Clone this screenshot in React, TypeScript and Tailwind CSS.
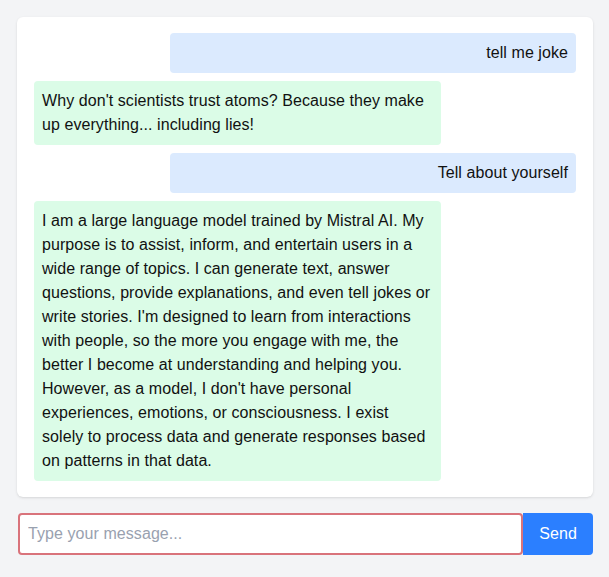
import React from "react";

interface Message {
  id: number;
  role: "user" | "bot";
  text: string;
}

const messages: Message[] = [
  { id: 1, role: "user", text: "tell me joke" },
  {
    id: 2,
    role: "bot",
    text: "Why don't scientists trust atoms? Because they make up everything... including lies!",
  },
  { id: 3, role: "user", text: "Tell about yourself" },
  {
    id: 4,
    role: "bot",
    text: "I am a large language model trained by Mistral AI. My purpose is to assist, inform, and entertain users in a wide range of topics. I can generate text, answer questions, provide explanations, and even tell jokes or write stories. I'm designed to learn from interactions with people, so the more you engage with me, the better I become at understanding and helping you. However, as a model, I don't have personal experiences, emotions, or consciousness. I exist solely to process data and generate responses based on patterns in that data.",
  },
];

const App: React.FC = () => {
  return (
    <div
      className="min-h-screen bg-gray-100 pt-[17px] pl-[17px] pr-4 text-[16px] leading-6 tracking-[0.07px] text-[#111]"
      style={{ fontFamily: '"Liberation Sans", Arial, sans-serif' }}
    >
      <div className="bg-white rounded-md shadow px-[17px] py-4 flex flex-col gap-2">
        {messages.map((msg) =>
          msg.role === "user" ? (
            <div key={msg.id} className="w-3/4 ml-auto bg-blue-100 rounded p-2 text-right">
              {msg.text}
            </div>
          ) : (
            <div key={msg.id} className="w-3/4 bg-green-100 rounded p-2">
              {msg.text}
            </div>
          )
        )}
      </div>
      <div className="mt-4 flex pl-px">
        <input
          type="text"
          placeholder="Type your message..."
          className="flex-1 min-w-0 border-2 border-[#d9737b] rounded px-2 py-[7px] leading-6 bg-white placeholder:text-gray-400 outline-none"
        />
        <button className="bg-blue-500 text-white px-4 rounded-r">Send</button>
      </div>
    </div>
  );
};

export default App;
